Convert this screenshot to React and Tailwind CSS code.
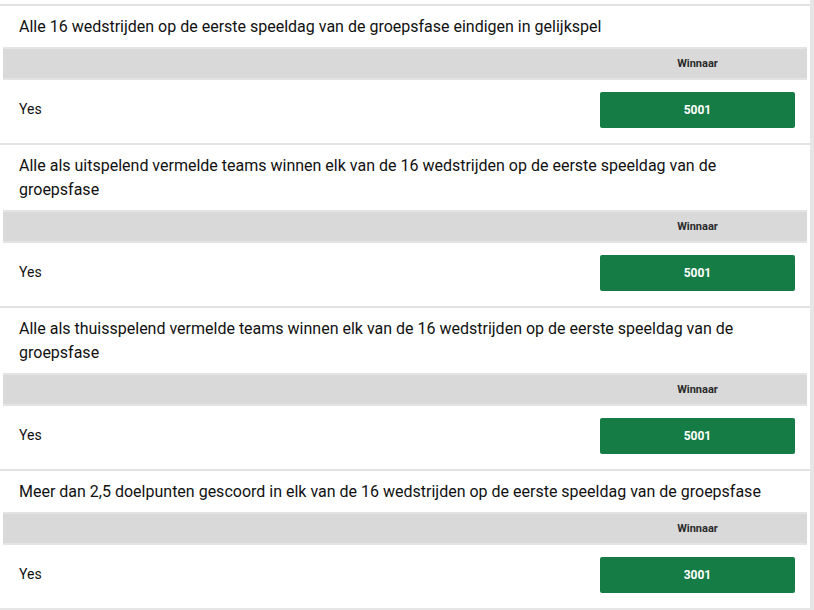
import React from 'react';

const markets = [
    { title: 'Alle 16 wedstrijden op de eerste speeldag van de groepsfase eindigen in gelijkspel', odds: '5001' },
    { title: 'Alle als uitspelend vermelde teams winnen elk van de 16 wedstrijden op de eerste speeldag van de groepsfase', odds: '5001' },
    { title: 'Alle als thuisspelend vermelde teams winnen elk van de 16 wedstrijden op de eerste speeldag van de groepsfase', odds: '5001' },
    { title: 'Meer dan 2,5 doelpunten gescoord in elk van de 16 wedstrijden op de eerste speeldag van de groepsfase', odds: '3001' },
];

const Market = ({ title, odds }) => (
    <div className="border-t-2 border-[#e3e3e3] px-[3px]">
        <div className="pl-4 pr-10 pt-[9px] pb-[8px] text-[16px] leading-6 text-[#111]">{title}</div>
        <div className="flex h-[33px] items-center border-y-2 border-[#e4e4e4] bg-[#d9d9d9] pr-3 pt-[1px]">
            <div className="flex-1" />
            <div className="w-[195px] text-center text-[11px] font-bold text-[#2a2a2a]">Winnaar</div>
        </div>
        <div className="flex h-[63px] items-center pr-3 pl-4 pb-[3px]">
            <div className="flex-1 pb-[2px] text-[14px] text-[#111]">Yes</div>
            <button className="h-9 w-[195px] rounded-[2px] bg-[#167c46] text-[12px] font-bold text-white">
                {odds}
            </button>
        </div>
    </div>
);

export default function App() {
    return (
        <div className="h-[610px] overflow-hidden bg-[#e6e6e6] font-['Roboto',sans-serif]">
            <div className="w-[810px] bg-white pt-1">
                {markets.map((m, i) => (
                    <Market key={i} {...m} />
                ))}
            </div>
        </div>
    );
}
